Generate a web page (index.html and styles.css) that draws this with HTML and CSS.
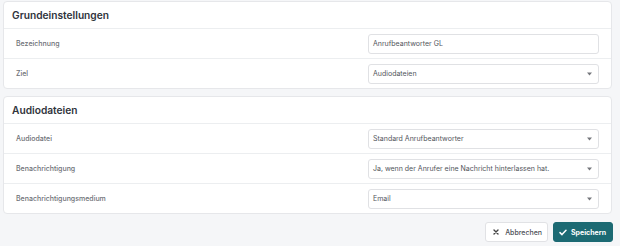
FILE: index.html
```
<!DOCTYPE html>
<html lang="de">
<head>
<meta charset="utf-8">
<title>Anrufbeantworter</title>
<link rel="stylesheet" href="styles.css">
</head>
<body>
<div class="page">
  <section class="card">
    <div class="card-header">Grundeinstellungen</div>
    <div class="row">
      <div class="label">Bezeichnung</div>
      <div class="field">Anrufbeantworter GL</div>
    </div>
    <div class="row">
      <div class="label">Ziel</div>
      <div class="field select"><span>Audiodateien</span><svg class="caret" width="5" height="4" viewBox="0 0 5 4"><path d="M0 0.5h5L2.5 3.5z" fill="#75777c"/></svg></div>
    </div>
  </section>
  <section class="card">
    <div class="card-header">Audiodateien</div>
    <div class="row">
      <div class="label">Audiodatei</div>
      <div class="field select"><span>Standard Anrufbeantworter</span><svg class="caret" width="5" height="4" viewBox="0 0 5 4"><path d="M0 0.5h5L2.5 3.5z" fill="#75777c"/></svg></div>
    </div>
    <div class="row">
      <div class="label">Benachrichtigung</div>
      <div class="field select"><span>Ja, wenn der Anrufer eine Nachricht hinterlassen hat.</span><svg class="caret" width="5" height="4" viewBox="0 0 5 4"><path d="M0 0.5h5L2.5 3.5z" fill="#75777c"/></svg></div>
    </div>
    <div class="row">
      <div class="label">Benachrichtigungsmedium</div>
      <div class="field select"><span>Email</span><svg class="caret" width="5" height="4" viewBox="0 0 5 4"><path d="M0 0.5h5L2.5 3.5z" fill="#75777c"/></svg></div>
    </div>
  </section>
  <div class="actions">
    <button class="btn btn-cancel"><svg width="6" height="6" viewBox="0 0 6 6"><path d="M1 1l4 4M5 1L1 5" stroke="#444" stroke-width="1.4" stroke-linecap="round"/></svg><span>Abbrechen</span></button>
    <button class="btn btn-save"><svg width="8" height="7" viewBox="0 0 8 7"><path d="M1 3.6l2 2L7 1.2" stroke="#fff" stroke-width="1.5" fill="none" stroke-linecap="round" stroke-linejoin="round"/></svg><span>Speichern</span></button>
  </div>
</div>
</body>
</html>
```
FILE: styles.css
```
html, body {
  margin: 0;
  padding: 0;
  background: #f5f6f8;
  font-family: Inter, "Noto Sans", "Liberation Sans", sans-serif;
}
.page {
  padding: 1px 8px 0 3px;
  display: flex;
  flex-direction: column;
  gap: 7px;
}
.card {
  background: #fff;
  border: 1px solid #e6e7ea;
  border-radius: 4px;
}
.card-header {
  height: 26px;
  display: flex;
  align-items: center;
  padding-left: 8px;
  font-size: 10.2px;
  font-weight: 600;
  color: #30343c;
  border-bottom: 1px solid #eceef0;
}
.row {
  height: 29px;
  display: grid;
  grid-template-columns: 1fr 231px;
  align-items: center;
  padding: 0 12px;
}
.row + .row {
  border-top: 1px solid #eceef0;
}
.label {
  font-size: 7px;
  font-weight: 500;
  color: #6d7076;
}
.field {
  height: 18px;
  border: 1px solid #e0e1e4;
  border-radius: 3px;
  display: flex;
  align-items: center;
  justify-content: space-between;
  padding: 0 6px 0 4px;
  font-size: 7px;
  color: #52555b;
  background: #fff;
}
.caret {
  display: block;
}
.actions {
  display: flex;
  justify-content: flex-end;
  gap: 5px;
  margin-top: 1px;
  margin-right: -1px;
}
.btn {
  height: 20px;
  display: flex;
  align-items: center;
  border-radius: 3px;
  font-family: Inter, "Noto Sans", "Liberation Sans", sans-serif;
  font-size: 7px;
  cursor: pointer;
}
.btn-cancel {
  background: #fff;
  border: 1px solid #e1e2e5;
  color: #4d5057;
  font-weight: 500;
  padding: 0 5px 0 7px;
  gap: 6px;
}
.btn-save {
  background: #1c6a73;
  border: 1px solid #1c6a73;
  color: #fff;
  font-weight: 700;
  padding: 0 6px 0 5px;
  gap: 4px;
}
```
